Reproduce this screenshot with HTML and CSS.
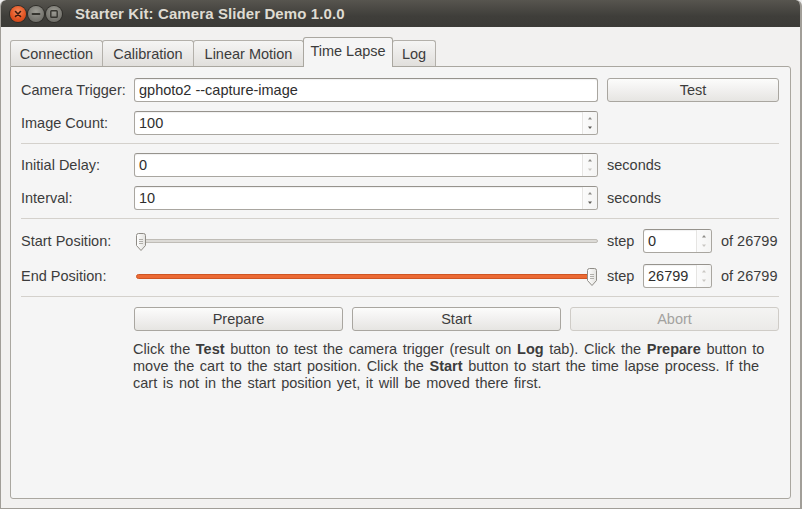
FILE: index.html
```html
<!DOCTYPE html>
<html>
<head>
<meta charset="utf-8">
<title>Starter Kit: Camera Slider Demo 1.0.0</title>
<link rel="stylesheet" href="styles.css">
</head>
<body>
<div class="window">
  <div class="titlebar">
    <div class="wbtns">
      <span class="wbtn close"><svg width="16" height="16" viewBox="0 0 16 16"><path d="M5.5 5.5l5 5M10.5 5.5l-5 5" stroke="#3b1a0e" stroke-width="1.6" stroke-linecap="round"/></svg></span>
      <span class="wbtn grey"><svg width="16" height="16" viewBox="0 0 16 16"><path d="M4.5 8h7" stroke="#35342f" stroke-width="1.8" stroke-linecap="round"/></svg></span>
      <span class="wbtn grey"><svg width="16" height="16" viewBox="0 0 16 16"><rect x="4.8" y="4.8" width="6.4" height="6.4" rx="0.8" fill="none" stroke="#35342f" stroke-width="1.4"/></svg></span>
    </div>
    <div class="title">Starter Kit: Camera Slider Demo 1.0.0</div>
  </div>

  <div class="content">
    <div class="tabs">
      <div class="tab t-conn">Connection</div>
      <div class="tab t-cal">Calibration</div>
      <div class="tab t-lin">Linear Motion</div>
      <div class="tab t-tl active">Time Lapse</div>
      <div class="tab t-log">Log</div>
    </div>

    <div class="pane">
      <div class="row">
        <div class="label">Camera Trigger:</div>
        <div class="entry"><span class="val">gphoto2 --capture-image</span></div>
        <div class="button">Test</div>
      </div>
      <div class="row gap">
        <div class="label">Image Count:</div>
        <div class="entry spin">
          <span class="val">100</span>
          <span class="arrows"><svg width="14" height="22" viewBox="0 0 14 22"><path d="M5 7.5h4l-2-2.5z" fill="#8d8b87"/><path d="M5 14.5h4l-2 2.5z" fill="#5d5b57"/></svg></span>
        </div>
      </div>
      <div class="sep"></div>

      <div class="row">
        <div class="label">Initial Delay:</div>
        <div class="entry spin">
          <span class="val">0</span>
          <span class="arrows"><svg width="14" height="22" viewBox="0 0 14 22"><path d="M5 7.5h4l-2-2.5z" fill="#8d8b87"/><path d="M5 14.5h4l-2 2.5z" fill="#c9c7c3"/></svg></span>
        </div>
        <div class="unit">seconds</div>
      </div>
      <div class="row gap">
        <div class="label">Interval:</div>
        <div class="entry spin">
          <span class="val">10</span>
          <span class="arrows"><svg width="14" height="22" viewBox="0 0 14 22"><path d="M5 7.5h4l-2-2.5z" fill="#8d8b87"/><path d="M5 14.5h4l-2 2.5z" fill="#5d5b57"/></svg></span>
        </div>
        <div class="unit">seconds</div>
      </div>
      <div class="sep sep2"></div>

      <div class="row">
        <div class="label">Start Position:</div>
        <div class="slider">
          <div class="track"></div>
          <svg class="handle h-start" width="12" height="20" viewBox="0 0 12 20"><defs><linearGradient id="hg1" x1="0" y1="0" x2="1" y2="0"><stop offset="0" stop-color="#ffffff"/><stop offset="1" stop-color="#e3e2df"/></linearGradient></defs><path d="M1.5 3.5a2 2 0 0 1 2-2h5a2 2 0 0 1 2 2v10l-4.5 5l-4.5-5z" fill="url(#hg1)" stroke="#8f8c86"/><path d="M4 7.5h4M4 9.5h4M4 11.5h4" stroke="#b0aea9"/></svg>
        </div>
        <div class="steps">
          <span class="steplbl">step</span>
          <div class="entry spin small">
            <span class="val">0</span>
            <span class="arrows"><svg width="14" height="22" viewBox="0 0 14 22"><path d="M5 7.5h4l-2-2.5z" fill="#8d8b87"/><path d="M5 14.5h4l-2 2.5z" fill="#c9c7c3"/></svg></span>
          </div>
          <span>of 26799</span>
        </div>
      </div>
      <div class="row gap2">
        <div class="label">End Position:</div>
        <div class="slider">
          <div class="track on"></div>
          <svg class="handle h-end" width="12" height="20" viewBox="0 0 12 20"><defs><linearGradient id="hg2" x1="0" y1="0" x2="1" y2="0"><stop offset="0" stop-color="#ffffff"/><stop offset="1" stop-color="#e3e2df"/></linearGradient></defs><path d="M1.5 3.5a2 2 0 0 1 2-2h5a2 2 0 0 1 2 2v10l-4.5 5l-4.5-5z" fill="url(#hg2)" stroke="#8f8c86"/><path d="M4 7.5h4M4 9.5h4M4 11.5h4" stroke="#b0aea9"/></svg>
        </div>
        <div class="steps">
          <span class="steplbl">step</span>
          <div class="entry spin small">
            <span class="val">26799</span>
            <span class="arrows"><svg width="14" height="22" viewBox="0 0 14 22"><path d="M5 7.5h4l-2-2.5z" fill="#c9c7c3"/><path d="M5 14.5h4l-2 2.5z" fill="#c9c7c3"/></svg></span>
          </div>
          <span>of 26799</span>
        </div>
      </div>
      <div class="sep sep3"></div>

      <div class="row actions">
        <div class="btns">
          <div class="button">Prepare</div>
          <div class="button">Start</div>
          <div class="button disabled">Abort</div>
        </div>
      </div>
      <div class="row">
        <p class="help">Click the <b>Test</b> button to test the camera trigger (result on <b>Log</b> tab). Click the <b>Prepare</b> button to<br>move the cart to the start position. Click the <b>Start</b> button to start the time lapse process. If the<br>cart is not in the start position yet, it will be moved there first.</p>
      </div>
    </div>
  </div>
</div>
</body>
</html>
```

FILE: styles.css
```css
* { box-sizing: border-box; margin: 0; padding: 0; }
html, body { width: 802px; height: 509px; overflow: hidden; }
body {
  font-family: "Liberation Sans", Arial, sans-serif;
  font-size: 14.5px;
  color: #3c3c3c;
  background: #efefef;
}

.window {
  width: 802px;
  height: 509px;
  display: flex;
  flex-direction: column;
  background: #f2f1f0;
  border-left: 1px solid #a19e98;
  border-right: 2px solid #a19e98;
  border-bottom: 1px solid #a19e98;
  border-radius: 6px 6px 0 0;
  overflow: hidden;
}

.titlebar {
  height: 27px;
  flex: none;
  display: flex;
  align-items: center;
  padding-left: 10px;
  background: linear-gradient(#57554f, #3f3e3a 60%, #3c3b37);
  border-radius: 6px 6px 0 0;
  margin: 0 -2px 0 -1px;
}
.wbtns { display: flex; gap: 2px; }
.wbtn {
  width: 16px;
  height: 16px;
  border-radius: 50%;
  display: block;
}
.wbtn svg { display: block; }
.close {
  background: radial-gradient(circle at 50% 35%, #f58a5c, #e25422 55%, #c23d12);
  box-shadow: 0 0 0 1px #2e2d29;
}
.grey {
  background: radial-gradient(circle at 50% 35%, #9d9c95, #7b7a74 55%, #66655f);
  box-shadow: 0 0 0 1px #2e2d29;
}
.title {
  margin-left: 13px;
  font-weight: bold;
  font-size: 15px;
  color: #dfdbd2;
  letter-spacing: 0.1px;
}

.content {
  flex: 1;
  display: flex;
  flex-direction: column;
  padding: 10px 9px 9px 9px;
}

.tabs {
  display: flex;
  align-items: flex-end;
  height: 29px;
  flex: none;
  position: relative;
  z-index: 2;
}
.tab {
  height: 26px;
  display: flex;
  align-items: center;
  justify-content: center;
  background: linear-gradient(#f5f5f4, #e1dfdc);
  border: 1px solid #b3b0aa;
  border-bottom: none;
  border-radius: 3px 3px 0 0;
  margin-left: -1px;
  color: #3c3c3c;
}
.t-conn { width: 93px; margin-left: 0; }
.t-cal { width: 92px; }
.t-lin { width: 111px; }
.t-tl { width: 90px; }
.t-log { width: 44px; }
.tab.active {
  height: 30px;
  margin-bottom: -1px;
  background: #f5f5f5;
  border-color: #aaa7a0;
  padding-bottom: 3px;
  position: relative;
  z-index: 3;
}

.pane {
  flex: 1;
  background: #f5f5f5;
  border: 1px solid #aaa7a0;
  border-radius: 0 3px 3px 3px;
  padding: 11px 11px 0 10px;
  display: flex;
  flex-direction: column;
}

.row {
  display: grid;
  grid-template-columns: 104px 464px 172px;
  column-gap: 9px;
  align-items: center;
  height: 24px;
}
.row.gap { margin-top: 9px; }
.row.gap2 { margin-top: 11px; }
.label { color: #3c3c3c; white-space: nowrap; }

.sep {
  height: 1px;
  background: #d4d1cc;
  margin: 8px 0 9px;
  flex: none;
}
.sep2 { margin-bottom: 10px; }
.sep3 { margin: 8px 0 10px; }

.entry {
  height: 24px;
  background: #fff;
  border: 1px solid #a9a6a0;
  border-top-color: #96938d;
  border-radius: 3px;
  box-shadow: inset 0 1px 1px rgba(0,0,0,0.06);
  display: flex;
  align-items: center;
  color: #2e2e2e;
}
.entry .val { flex: 1; padding-left: 4px; white-space: nowrap; overflow: hidden; }
.spin .arrows {
  width: 15px;
  align-self: stretch;
  border-left: 1px solid #e6e5e3;
  display: flex;
  align-items: center;
  justify-content: center;
  background: linear-gradient(90deg, #fbfbfb, #f4f4f3);
  border-radius: 0 2px 2px 0;
}
.spin .arrows svg { display: block; }

.unit { color: #3c3c3c; }

.button {
  height: 24px;
  display: flex;
  align-items: center;
  justify-content: center;
  border: 1px solid #a9a6a0;
  border-radius: 3px;
  background: linear-gradient(#fcfcfb, #f1f0ef 50%, #e6e5e2);
  color: #3c3c3c;
}
.button.disabled {
  background: linear-gradient(#f4f4f3, #ebeae8);
  border-color: #cfccc7;
  color: #a3a29f;
}

.slider {
  position: relative;
  height: 24px;
  display: flex;
  align-items: center;
  padding-left: 2px;
}
.track {
  flex: 1;
  height: 4px;
  background: #dddbd7;
  border: 1px solid #bfbcb6;
  border-radius: 2px;
}
.track.on {
  height: 5px;
  margin-right: 8px;
  background: #ec6a34;
  border-color: #cf5523;
  border-radius: 3px;
}
.handle { position: absolute; top: 3px; display: block; }
.h-start { left: 1px; }
.h-end { right: 0; }

.steps {
  display: flex;
  align-items: center;
  white-space: nowrap;
}
.steplbl { width: 36px; flex: none; }
.steps .small { width: 69px; margin-right: 9px; flex: none; }

.btns {
  grid-column: 2 / 4;
  display: grid;
  grid-template-columns: repeat(3, 1fr);
  gap: 9px;
}

.help {
  grid-column: 2 / 4;
  margin-left: -1px;
  margin-top: 10px;
  line-height: 17px;
  word-spacing: 1.6px;
  color: #3c3c3c;
  white-space: nowrap;
}
.help b { font-weight: bold; }
```
